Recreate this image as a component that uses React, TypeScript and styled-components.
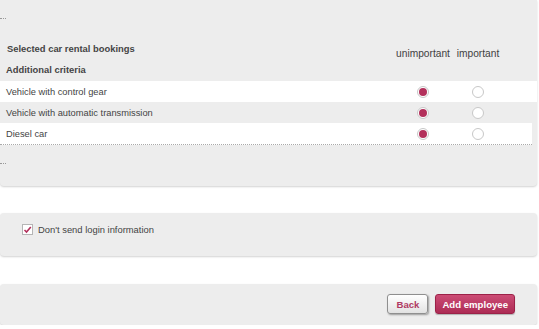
import React from "react";
import styled, { createGlobalStyle } from "styled-components";

const Global = createGlobalStyle`
  html, body { margin: 0; padding: 0; background: #ffffff; }
  body { font-family: "Liberation Sans", Arial, sans-serif; color: #444; }
`;

const Page = styled.div`
  width: 539px;
  display: flex;
  flex-direction: column;
`;

const Panel = styled.div<{ $h: number; $mt: number; $top?: boolean }>`
  box-sizing: border-box;
  width: 537px;
  height: ${(p) => p.$h}px;
  margin-top: ${(p) => p.$mt}px;
  background: #ededed;
  border-radius: ${(p) => (p.$top ? "0 0 4px 4px" : "4px")};
  box-shadow: 0 1px 2px rgba(0, 0, 0, 0.18);
  display: flex;
  flex-direction: column;
`;

const DotMark = styled.div<{ $mt: number }>`
  width: 6px;
  margin-top: ${(p) => p.$mt}px;
  border-top: 1px dotted #999;
`;

const HeadRow = styled.div`
  display: flex;
  align-items: flex-end;
  height: 21px;
  margin-top: 23px;
`;

const Title = styled.div`
  flex: 1;
  padding-left: 7px;
  font-size: 9.4px;
  font-weight: bold;
  color: #444;
  line-height: 12px;
  padding-bottom: 8px;
`;

const ColHead = styled.div<{ $w: number }>`
  width: ${(p) => p.$w}px;
  text-align: center;
  font-size: 10.2px;
  color: #3f3f3f;
  line-height: 12px;
  padding-bottom: 3px;
`;

const SubTitle = styled.div`
  height: 14px;
  padding-left: 6px;
  padding-bottom: 4px;
  font-size: 9.4px;
  font-weight: bold;
  line-height: 14px;
`;

const Row = styled.div<{ $alt: boolean; $last?: boolean }>`
  display: flex;
  align-items: center;
  height: 21px;
  background: ${(p) => (p.$alt ? "#ededed" : "#ffffff")};
  border-bottom: ${(p) => (p.$last ? "1px dotted #aaa" : "none")};
  width: ${(p) => (p.$last ? "532px" : "537px")};
`;

const RowLabel = styled.div`
  flex: 1;
  padding-left: 6px;
  font-size: 9.3px;
  color: #444;
`;

const Cell = styled.div<{ $w: number }>`
  width: ${(p) => p.$w}px;
  display: flex;
  justify-content: center;
`;

const Radio = styled.span<{ $on: boolean }>`
  box-sizing: border-box;
  width: 12px;
  height: 12px;
  border-radius: 50%;
  border: 1px solid #c8c8c8;
  background: #fff;
  display: flex;
  align-items: center;
  justify-content: center;
  &::after {
    content: "";
    width: 8px;
    height: 8px;
    border-radius: 50%;
    background: ${(p) => (p.$on ? "#b3305b" : "transparent")};
  }
`;

const CheckLine = styled.label`
  display: flex;
  align-items: center;
  gap: 5px;
  padding-left: 22px;
  margin-top: 11px;
  font-size: 9.4px;
  color: #444;
`;

const Box = styled.span`
  box-sizing: border-box;
  width: 11px;
  height: 11px;
  border: 1px solid #b5b5b5;
  background: #fff;
  display: flex;
  align-items: center;
  justify-content: center;
`;

const Actions = styled.div`
  display: flex;
  justify-content: flex-end;
  gap: 7px;
  padding-right: 22px;
  margin-top: 10px;
`;

const Btn = styled.button<{ $primary?: boolean }>`
  box-sizing: border-box;
  height: 20px;
  padding: 0 ${(p) => (p.$primary ? "6px" : "8px")};
  border-radius: 3px;
  font-family: "Liberation Sans", Arial, sans-serif;
  font-size: 9.6px;
  font-weight: bold;
  cursor: pointer;
  border: 1px solid ${(p) => (p.$primary ? "#9c2248" : "#8f8f8f")};
  color: ${(p) => (p.$primary ? "#ffffff" : "#b03a63")};
  background: ${(p) =>
    p.$primary
      ? "linear-gradient(#cc4c75, #ad2c55)"
      : "linear-gradient(#ffffff, #e2e2e2)"};
  box-shadow: ${(p) =>
    p.$primary ? "0 1px 1px rgba(0,0,0,0.25)" : "1px 1px 2px rgba(0,0,0,0.35)"};
`;

const rows = [
  "Vehicle with control gear",
  "Vehicle with automatic transmission",
  "Diesel car",
];

export default function App() {
  return (
    <Page>
      <Global />
      <Panel $h={186} $mt={0} $top>
        <DotMark $mt={18} />
        <HeadRow>
          <Title>Selected car rental bookings</Title>
          <ColHead $w={58}>unimportant</ColHead>
          <ColHead $w={52}>important</ColHead>
          <ColHead $w={33} />
        </HeadRow>
        <SubTitle>Additional criteria</SubTitle>
        {rows.map((r, i) => (
          <Row key={r} $alt={i % 2 === 1} $last={i === rows.length - 1}>
            <RowLabel>{r}</RowLabel>
            <Cell $w={58}>
              <Radio $on />
            </Cell>
            <Cell $w={52}>
              <Radio $on={false} />
            </Cell>
            <Cell $w={i === rows.length - 1 ? 28 : 33} />
          </Row>
        ))}
        <DotMark $mt={18} />
      </Panel>
      <Panel $h={43} $mt={27}>
        <CheckLine>
          <Box>
            <svg width="9" height="9" viewBox="0 0 9 9">
              <path d="M1.5 5 L3.5 7 L7.8 2" fill="none" stroke="#b3305b" strokeWidth="1.6" />
            </svg>
          </Box>
          Don't send login information
        </CheckLine>
      </Panel>
      <Panel $h={41} $mt={28}>
        <Actions>
          <Btn>Back</Btn>
          <Btn $primary>Add employee</Btn>
        </Actions>
      </Panel>
    </Page>
  );
}
